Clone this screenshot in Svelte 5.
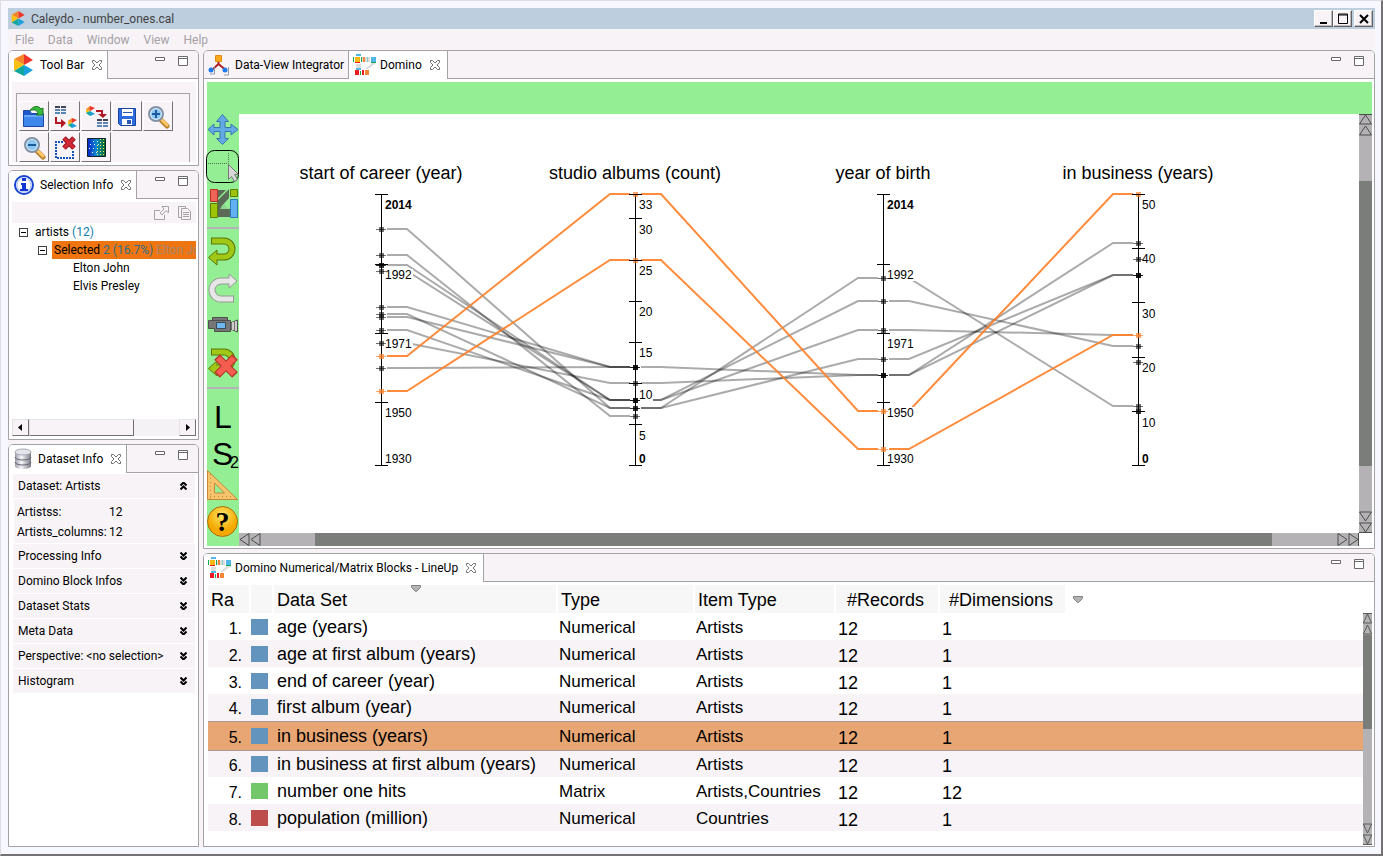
<script>
  const menus = ['File', 'Data', 'Window', 'View', 'Help'];
  const sections = ['Processing Info', 'Domino Block Infos', 'Dataset Stats', 'Meta Data', 'Perspective: <no selection>', 'Histogram'];
  const tools = ['open', 'import', 'export', 'save', 'zoomin', 'zoomout', 'clear', 'heatmap'];
  const modes = ['move', 'select', 'blocks', '|', 'undo', 'redo', 'camera', 'reset', '||', 'label', 'small', 'ruler', 'help'];

  const blue = '#6394bd';
  const rows = [
    ['age (years)', 'Numerical', 'Artists', 12, 1, blue],
    ['age at first album (years)', 'Numerical', 'Artists', 12, 1, blue],
    ['end of career (year)', 'Numerical', 'Artists', 12, 1, blue],
    ['first album (year)', 'Numerical', 'Artists', 12, 1, blue],
    ['in business (years)', 'Numerical', 'Artists', 12, 1, blue],
    ['in business at first album (years)', 'Numerical', 'Artists', 12, 1, blue],
    ['number one hits', 'Matrix', 'Artists,Countries', 12, 12, '#73c76b'],
    ['population (million)', 'Numerical', 'Countries', 12, 1, '#bd4d4a'],
  ];

  const yearTicks = [[194, '2014', 209], [264, '1992', 279], [333, '1971', 348], [402, '1950', 417], [465, '1930', 463]];
  const axes = [
    { x: 381, title: 'start of career (year)', ticks: yearTicks, dots: [229, 255, 265, 265, 271, 307, 314, 317, 330, 343, 368], hot: [356, 391] },
    { x: 635, title: 'studio albums (count)', ticks: [[194, '33', 209], [218, '30', 234], [260, '25', 275], [301, '20', 316], [342, '15', 357], [383, '10', 399], [424, '5', 440], [465, '0', 463]], dots: [367, 367, 367, 383, 400, 400, 400, 408, 408, 416], hot: [194, 260] },
    { x: 883, title: 'year of birth', ticks: yearTicks, dots: [278, 301, 330, 359, 375, 375, 375], hot: [411, 449] },
    { x: 1138, title: 'in business (years)', ticks: [[194, '50', 209], [248, '40', 263], [302, '30', 318], [357, '20', 372], [411, '10', 427], [465, '0', 463]], dots: [243, 259, 275, 275, 275, 346, 362, 406, 411, 411], hot: [194, 335] },
  ];
  // [from axis, start value, end value, highlighted]
  const links = [
    [0, 229, 408], [0, 255, 416], [0, 265, 400], [0, 271, 400], [0, 307, 367], [0, 314, 408], [0, 317, 367], [0, 330, 400], [0, 343, 383], [0, 368, 367],
    [1, 367, 375], [1, 383, 375], [1, 408, 278], [1, 400, 301], [1, 400, 330], [1, 408, 359],
    [2, 278, 406], [2, 301, 346], [2, 330, 335], [2, 359, 275], [2, 375, 243], [2, 375, 275],
    [0, 356, 194, 1], [0, 391, 260, 1], [1, 194, 411, 1], [1, 260, 449, 1], [2, 411, 194, 1], [2, 449, 335, 1],
  ];
  const route = ([a, y1, y2]) => {
    const p = axes[a].x, q = axes[a + 1].x;
    return `M${p + 6} ${y1}H${p + 26}L${q - 25} ${y2}H${q - 5}`;
  };
  const bold = (t) => t === '2014' || t === '0';
</script>

{#snippet logo(size)}
  <svg width={size} height={size} viewBox="0 0 20 22" aria-hidden="true">
    <path fill="#f7862a" d="M0 5 10 0v11z" /><path fill="#ee3529" d="M10 0l9 6-9 5z" />
    <path fill="#fdc010" d="M0 5l10 6-10 6z" /><path fill="#12a79d" d="M0 17l10-6v11z" /><path fill="#1ba0de" d="M10 11l9 5-9 6z" />
  </svg>
{/snippet}

{#snippet dominoIcon()}
  <svg width="24" height="22" viewBox="0 0 24 22" aria-hidden="true">
    <path fill="#ddd" d="M8 3h9v5H8zM19 9h4l-8 6h-3zM3 10h5v5H3z" />
    <path fill="#4fb8e6" d="M3 0h5v2H3zM18 3h5v5h-5zM3 14h5v2H3z" /><path fill="#14a651" d="M0 3h1v5H0zM8 3h1v5H8zM18 8h5v1h-5zM7 17h1v4H7z" />
    <path fill="#fdb913" d="M2 3h5v5H2z" /><path fill="#f58634" d="M10 3h2v5h-2zM12 16h4v5h-4z" /><path fill="#ed1c24" d="M2 8h5v1H2zM2 16h4v5H2zM9 16h2v5H9z" />
    <path fill="#8cc" d="M14 3h1v5h-1z" />
  </svg>
{/snippet}

{#snippet close()}
  <button class="x" aria-label="Close">
    <svg width="12" height="12" viewBox="0 0 12 12"><path fill="#fff" stroke="#737173" d="M1.500 1.500h2L6 4l2.500-2.500h2v2L8 6l2.500 2.500v2h-2L6 8l-2.500 2.500h-2v-2L4 6 1.500 3.500z" /></svg>
  </button>
{/snippet}

{#snippet controls()}
  <div class="controls">
    <button aria-label="Minimize"><svg width="11" height="11" viewBox="0 0 11 11"><path fill="#fff" stroke="#6b696b" d="M.5 1.500h9v3h-9z" /></svg></button>
    <button aria-label="Maximize"><svg width="11" height="11" viewBox="0 0 11 11"><path fill="#fff" stroke="#6b696b" d="M.5.5h9v9h-9zM.5 2.500h9" /></svg></button>
  </div>
{/snippet}

{#snippet grid4(x, y)}
  <path fill="#445" d="M{x} {y}h5v2h-5zM{x + 6} {y}h5v2h-5z" />
  <path fill="#5b86b5" d="M{x} {y + 3}h5v2h-5zM{x + 6} {y + 3}h5v2h-5zM{x} {y + 6}h5v2h-5zM{x + 6} {y + 6}h5v2h-5z" />
{/snippet}

{#snippet miniLogo(x, y)}
  <path fill="#f7862a" d="M{x} {y + 3}l4-3v5z" /><path fill="#ee3529" d="M{x + 4} {y}l5 2-5 3z" />
  <path fill="#fdc010" d="M{x} {y + 3}l4 2-4 2z" /><path fill="#12a79d" d="M{x} {y + 7}l4-2v5z" /><path fill="#1ba0de" d="M{x + 4} {y + 5}l5 3-5 2z" />
{/snippet}

{#snippet toolIcon(name)}
  <svg width="26" height="26" viewBox="0 0 26 26" aria-hidden="true">
    {#if name === 'open'}
      <path fill="#1c58c8" stroke="#174aa8" d="M2.500 7.500h6l2 3h12v13h-20z" /><path fill="#3f86ec" d="M3 12h19v11H3z" /><path fill="#6aa7f5" d="M3 12h19v2H3z" />
      <path fill="#3aba3c" stroke="#15781c" d="M9 7.500C12 3 17 2 20 6l2-1v7h-7l2-2c-1-3-4-4-8-2.500z" />
    {:else if name === 'import'}
      {@render grid4(3, 3)}{@render miniLogo(16, 15)}
      <path fill="none" stroke="#b01824" stroke-width="2" d="M4 14v6h6" /><path fill="#b01824" d="M9 16l5 4-5 5z" />
    {:else if name === 'export'}
      {@render miniLogo(3, 3)}{@render grid4(14, 16)}
      <path fill="none" stroke="#b01824" stroke-width="2" d="M13 8h6v4" /><path fill="#b01824" d="M15 11h9l-4 4z" />
    {:else if name === 'save'}
      <path fill="#2c6be0" stroke="#1b44a0" d="M4.500 5.500h17v17h-15l-2-2z" /><path fill="#fff" d="M8 6h11v7H8zM8 16h10v6H8z" /><path fill="#2b57b0" d="M13 17h4v4h-4zM9 9h9v1H9z" />
    {:else if name === 'zoomin' || name === 'zoomout'}
      <path stroke="#b9832f" stroke-width="5" stroke-linecap="round" d="M16 17l6 6" /><path stroke="#ffc766" stroke-width="3" stroke-linecap="round" d="M17 17l5 5" />
      <circle cx="11" cy="11" r="7" fill="#d5ecfb" stroke="#8292a4" stroke-width="2" /><circle cx="11" cy="11" r="5" fill="#8cc6f0" />
      <path stroke="#1d5a9e" stroke-width="2" d={name === 'zoomin' ? 'M7 11h8M11 7v8' : 'M7 11h8'} />
    {:else if name === 'clear'}
      <path fill="none" stroke="#1454b8" stroke-width="2" stroke-dasharray="2 1" d="M11 8H4v16h17v-7" /><path stroke="#8f1420" stroke-width="5" d="M12 4l10 10M22 4L12 14" /><path stroke="#d42836" stroke-width="3" d="M12 4l10 10M22 4L12 14" />
    {:else}
      <defs><linearGradient id="heat"><stop offset="0" stop-color="#0b23c8" /><stop offset=".5" stop-color="#0b8ad0" /><stop offset="1" stop-color="#0a6a18" /></linearGradient></defs>
      <path fill="url(#heat)" stroke="#123" d="M4.500 4.500h18v18h-18z" /><path stroke="#e8f45a" stroke-dasharray="1 2" d="M17.500 5v17M20.500 5v17M14.500 11v11" /><path stroke="#fff" stroke-dasharray="1 3" d="M7 10.500h10M6 14.500h6M9 18.500h5M10 7.500h7" />
    {/if}
  </svg>
{/snippet}

{#snippet modeIcon(name)}
  <svg width="32" height="37" viewBox="0 0 32 37" aria-hidden="true">
    {#if name === 'move'}
      <path fill="#63a9e3" stroke="#3a76ae" stroke-linejoin="round" d="M15.500 3.500l6 7h-3.500v6h6V13l7 5.500-7 5.500v-3.500h-6v7h3.500l-6 6-6-6H13v-7H7V24l-6-5.500L7 13v3.500h6v-6H9.500z" />
    {:else if name === 'select'}
      <rect x="-.5" y="2.500" width="32" height="32" rx="8" fill="none" stroke="#000" /><path fill="none" stroke="#4d754b" stroke-dasharray="1 1" d="M1 15.500h20.500V4" />
      <path fill="#d8d8d8" stroke="#777" d="M21.500 16.500v15l3-3 3 5 3-2-3-5h4z" />
    {:else if name === 'blocks'}
      <path fill="#5c6b58" d="M10 16L22 4v9l-8 9 8 3v7H10z" /><path fill="#5c6b58" d="M10 5h9l-9 9zM14 24h10v8H14z" /><path fill="#8bd990" d="M13 24l4-5 5 5z" />
      <path fill="#ee6457" stroke="#b82f2a" d="M3.500 4.500h7v12h-7z" /><path fill="#9bc40a" stroke="#5f7e08" d="M3.500 18.500h7v14h-7zM23.500 4.500h7v7h-7z" /><path fill="#63b0f0" stroke="#2e77b8" d="M23.500 14.500h7v18h-7z" />
    {:else if name === 'undo' || name === 'reset'}
      <path fill="none" stroke="#587708" stroke-width="7" d="M4 8h13a8 8 0 0 1 0 16H8" /><path fill="#a2c816" stroke="#587708" d="M10 17v15L1.500 24.500z" /><path fill="none" stroke="#a2c816" stroke-width="5" d="M5 8h12a8 8 0 0 1 0 16H8" />
      {#if name === 'reset'}<path stroke="#b6332c" stroke-width="8" d="M10 13l18 18M28 13L10 31" /><path stroke="#f45d50" stroke-width="6" d="M11 14l16 16M27 14L11 30" />{/if}
    {:else if name === 'redo'}
      <path fill="none" stroke="#999" stroke-width="7" d="M27 29H14a9 9 0 0 1 0-18h8" /><path fill="#e8e8e8" stroke="#999" d="M22 4l8 7-8 7z" /><path fill="none" stroke="#e6e6e6" stroke-width="5" d="M26 29H14a9 9 0 0 1 0-18h9" />
    {:else if name === 'camera'}
      <path fill="#777" stroke="#4e514e" d="M5.500 10.500h15v3h-15zM1.500 13.500h22v11h-16v-3h-6zM23.500 16l7-3v12l-7-3z" /><path fill="#6eb9f2" stroke="#3c4a55" d="M9.500 15.500h9v6h-9z" /><path fill="#ccc" d="M25 15h2v8h-2zM28 14h2v10h-2z" />
    {:else if name === 'label'}
      <text x="7" y="33" font-size="32">L</text>
    {:else if name === 'small'}
      <text x="5" y="33" font-size="32">S</text><text x="23" y="36" font-size="16">2</text>
    {:else if name === 'ruler'}
      <path fill="#f7c36d" stroke="#c58839" stroke-linejoin="round" fill-rule="evenodd" d="M.5 1.500v29h30zM7.500 14v10h10z" /><path stroke="#c58839" stroke-dasharray="1 3" d="M3.500 5v25M3 27.500h24" />
    {:else}
      <defs><radialGradient id="gold" cy=".3"><stop offset="0" stop-color="#ffe86a" /><stop offset="1" stop-color="#f5a800" /></radialGradient></defs>
      <circle cx="15.500" cy="15.500" r="15" fill="url(#gold)" stroke="#a86f10" /><text class="q" x="15.500" y="25" font-size="28" text-anchor="middle">?</text>
    {/if}
  </svg>
{/snippet}

{#snippet bar(top, size, w)}
  <div class="vbar" style:width="{w}px">
    <svg width={w} height="22" viewBox="0 0 13 22" preserveAspectRatio="none"><path d="M.5 10L6.500 1l6 9zM.5 21l6-9 6 9zM0 .5h13" /></svg>
    <div class="track"><i style:top="{top}%" style:height="{size}%"></i></div>
    <svg width={w} height="22" viewBox="0 0 13 22" preserveAspectRatio="none"><path d="M.5 1l6 9 6-9zM.5 12l6 9 6-9zM0 21.500h13" /></svg>
  </div>
{/snippet}

<div class="window">
  <header class="title">
    {@render logo(15)}
    <span>Caleydo - number_ones.cal</span>
    <div class="winbtns">
      <button aria-label="Minimize window"><svg width="12" height="12" viewBox="0 0 12 12"><path d="M2 9h7v2H2z" /></svg></button>
      <button aria-label="Maximize window"><svg width="12" height="12" viewBox="0 0 12 12"><path fill="none" stroke="#000" d="M1.500 1h9v9.500h-9zM1.500 2h9" /></svg></button>
      <button class="gap" aria-label="Close window"><svg width="12" height="12" viewBox="0 0 12 12"><path stroke="#000" stroke-width="2" d="M2 2l8 8M10 2l-8 8" /></svg></button>
    </div>
  </header>
  <nav>{#each menus as m}<button>{m}</button>{/each}</nav>

  <main>
    <aside>
      <section class="panel">
        <div class="head">
          <div class="tab on">{@render logo(22)}<span>Tool Bar</span>{@render close()}</div>
          {@render controls()}
        </div>
        <div class="body">
          <div class="shade">
            <div class="tools">
              {#each tools as t}<button aria-label={t}>{@render toolIcon(t)}</button>{/each}
            </div>
          </div>
        </div>
      </section>

      <section class="panel selection">
        <div class="head">
          <div class="tab on">
            <svg width="22" height="22" viewBox="0 0 22 22" aria-hidden="true"><circle cx="11" cy="11" r="9" fill="#fff" stroke="#1a45cf" stroke-width="2" /><circle cx="11" cy="11" r="7" fill="none" stroke="#a8bdf5" /><path fill="#1238d0" d="M9 4h4v3H9zM8 9h5v6h2v2H7v-2h2v-4H8z" /></svg>
            <span>Selection Info</span>{@render close()}
          </div>
          {@render controls()}
        </div>
        <div class="body">
          <div class="strip">
            <svg width="16" height="16" viewBox="0 0 16 16" fill="none" stroke="#a5a2a5"><path d="M6 5.500H.5v9h10V10M8 1.500h6.500V8L12 5.500 8 10 6 8l4-4z" /></svg>
            <svg width="16" height="16" viewBox="0 0 16 16" fill="none" stroke="#a5a2a5"><path d="M4 12.500H1.500v-11h7V3M4.500 3.500h6l3 3v8h-9zM6 7.500h6M6 9.500h6M6 11.500h6" /></svg>
          </div>
          <div class="tree">
            <div class="node"><button class="fold" aria-label="Collapse artists"></button><span>artists <em>(12)</em></span></div>
            <div class="node l1"><button class="fold" aria-label="Collapse selected"></button><span class="picked">Selected <em>2 (16.7%)</em> <small>Elton John</small></span></div>
            <div class="node l2">Elton John</div>
            <div class="node l2">Elvis Presley</div>
          </div>
          <div class="hscroll">
            <button aria-label="Scroll left"><svg width="5" height="7" viewBox="0 0 5 7"><path d="M4 0v7L0 3.500z" /></svg></button>
            <div class="thumb"></div><div class="rest"></div>
            <button aria-label="Scroll right"><svg width="5" height="7" viewBox="0 0 5 7"><path d="M1 0v7l4-3.500z" /></svg></button>
          </div>
        </div>
      </section>

      <section class="panel dataset">
        <div class="head">
          <div class="tab on">
            <svg width="20" height="22" viewBox="0 0 20 22" aria-hidden="true">
              <defs><linearGradient id="cyl"><stop offset="0" stop-color="#9c9caa" /><stop offset=".4" stop-color="#f6f6fa" /><stop offset="1" stop-color="#7a7a86" /></linearGradient></defs>
              <path fill="url(#cyl)" d="M2 4v14c0 4 16 4 16 0V4z" /><ellipse cx="10" cy="4" rx="8" ry="3" fill="#e4e4ec" stroke="#aaaab4" /><path fill="none" stroke="#666672" d="M2 9c0 4 16 4 16 0M2 14c0 4 16 4 16 0" />
            </svg>
            <span>Dataset Info</span>{@render close()}
          </div>
          {@render controls()}
        </div>
        <div class="body">
          <button class="fold-row">Dataset: Artists<svg width="7" height="8" viewBox="0 0 7 8"><path d="M.5 3.500l3-3 3 3M.5 7.500l3-3 3 3" /></svg></button>
          <dl><dt>Artistss:</dt><dd>12</dd><dt>Artists_columns:</dt><dd>12</dd></dl>
          {#each sections as s}
            <button class="fold-row">{s}<svg width="7" height="8" viewBox="0 0 7 8"><path d="M.5.5l3 3 3-3M.5 4.500l3 3 3-3" /></svg></button>
          {/each}
        </div>
      </section>
    </aside>

    <div class="right">
      <section class="panel domino">
        <div class="head">
          <div class="tab">
            <svg width="22" height="22" viewBox="0 0 22 22" aria-hidden="true"><path fill="#fba919" stroke="#e88b0c" d="M7.500 1.500h6v6h-6z" /><path fill="none" stroke="#b01f24" stroke-width="2" d="M10.500 8v2L5 15M10.500 10l6 5" /><circle cx="3" cy="16" r="2.500" fill="#1d7ae8" /><circle cx="17" cy="16" r="2.500" fill="#1d7ae8" /><path fill="none" stroke="#99a" d="M6.500 12v8H2M20.500 13v8H16" /></svg>
            <span>Data-View Integrator</span>
          </div>
          <div class="tab on mid">{@render dominoIcon()}<span>Domino</span>{@render close()}</div>
          {@render controls()}
        </div>
        <div class="body">
          <div class="canvas">
            <div class="modes">
              {#each modes as m}
                {#if m === '|'}<hr />{:else if m === '||'}<hr class="tall" />{:else}<button aria-label={m}>{@render modeIcon(m)}</button>{/if}
              {/each}
            </div>
            <div class="stage">
              <svg class="chart" viewBox="239 114 1120 419" role="img" aria-label="Parallel coordinates of artists">
                {#each links as l}<path class="link" class:hot={l[3]} d={route(l)} />{/each}
                {#each axes as a}
                  <text class="name" x={a.x} y="179" text-anchor="middle">{a.title}</text>
                  {#each a.ticks as t}<rect x={a.x + 4} y={t[2] - 10} width={t[1].length * 7} height="12" fill="#fff" />{/each}
                  <rect x={a.x} y="194" width="1" height="272" />
                  <g class="dots">{#each a.dots as d}<path d="M{a.x - 2} {d - 2}h5v5h-5z" /><path d="M{a.x - 5} {d}h10v1h-10z" />{/each}</g>
                  <g class="dots warm">{#each a.hot as d}<path d="M{a.x - 2} {d - 2}h5v5h-5z" /><path d="M{a.x - 5} {d}h10v1h-10z" />{/each}</g>
                  {#each a.ticks as t}
                    <rect x={a.x - 6} y={t[0]} width="13" height="1" />
                    <text class="tick" class:strong={bold(t[1])} x={a.x + 4} y={t[2]}>{t[1]}</text>
                  {/each}
                {/each}
              </svg>
              {@render bar(12, 76, 13)}
              <div class="hbar">
                <svg width="22" height="13" viewBox="0 0 22 13"><path d="M10 .5L1 6.500l9 6zM21 .5l-9 6 9 6z" /></svg>
                <div class="track"><i></i></div>
                <svg width="22" height="13" viewBox="0 0 22 13"><path d="M1 .5l9 6-9 6zM12 .5l9 6-9 6zM21.500 0v13" /></svg>
              </div>
            </div>
          </div>
        </div>
      </section>

      <section class="panel lineup">
        <div class="head">
          <div class="tab on mid">{@render dominoIcon()}<span>Domino Numerical/Matrix Blocks - LineUp</span>{@render close()}</div>
          {@render controls()}
        </div>
        <div class="body">
          <table>
            <colgroup><col class="c1" /><col class="c2" /><col class="c3" /><col class="c4" /><col class="c5" /><col class="c6" /><col class="c7" /><col /></colgroup>
            <thead>
              <tr>
                <th>Ra</th><th aria-label="Colour"></th><th class="sorted">Data Set<svg class="sort" width="10" height="7" viewBox="0 0 10 7"><path d="M.5.5h9v2l-4 4h-1l-4-4z" /></svg></th>
                <th>Type</th><th>Item Type</th><th class="num">#Records</th><th class="num">#Dimensions</th>
                <th class="more"><svg width="10" height="7" viewBox="0 0 10 7"><path d="M.5.5h9v2l-4 4h-1l-4-4z" /></svg></th>
              </tr>
            </thead>
            <tbody>
              {#each rows as r, i}
                <tr class:current={i === 4}>
                  <td class="rank">{i + 1}.</td><td><i class="swatch" style:background={r[5]}></i></td><td class="set">{r[0]}</td>
                  <td class="kind">{r[1]}</td><td class="kind">{r[2]}</td><td class="count">{r[3]}</td><td class="count">{r[4]}</td><td></td>
                </tr>
              {/each}
            </tbody>
          </table>
          <div class="side">{@render bar(0, 50, 9)}</div>
        </div>
      </section>
    </div>
  </main>
</div>

<style>
  :global(body) { background: #f7f7ff; }
  * { box-sizing: border-box; }
  .window { min-height: 100vh; display: flex; flex-direction: column; padding: 7px 6px 7px 7px; border: 1px solid #e0dce0; border-right: 2px solid #737173; border-bottom: 2px solid #737173; background: #f7f7ff; color: #000; font: 12px/18px Roboto, sans-serif; }
  button { margin: 0; padding: 0; border: 0; background: none; color: inherit; font: inherit; }
  svg { display: block; flex: none; }
  em, i { font-style: normal; }

  .title { height: 21px; flex: none; display: flex; align-items: center; gap: 5px; padding: 0 2px 0 3px; background: #bdcfde; color: #424142; }
  .winbtns { margin-left: auto; display: flex; }
  .winbtns button { width: 19px; height: 17px; display: grid; place-items: center; background: #f7f3f7; border: 1px solid; border-color: #fff #636163 #636163 #fff; box-shadow: inset -1px -1px #bbb; }
  .winbtns .gap { margin-left: 2px; }
  nav { height: 21px; flex: none; display: flex; align-items: center; gap: 14px; padding-left: 7px; background: #f7f3f7; color: #a5a2a5; }

  main { flex: 1; display: grid; grid-template-columns: 191px 1fr; gap: 4px; background: #f7f3f7; }
  aside, .right { display: flex; flex-direction: column; gap: 4px; min-width: 0; }
  .panel { display: flex; flex-direction: column; border: 1px solid #a5a2a5; border-radius: 5px 5px 0 0; background: #fff; }
  .head { height: 28px; flex: none; display: flex; background: linear-gradient(#a5a2a5, #a5a2a5) bottom / 100% 1px no-repeat #f7f3f7; border-radius: 4px 4px 0 0; }
  .tab { display: flex; align-items: center; gap: 5px; padding: 0 4px; white-space: nowrap; }
  .tab.on { background: #fff; border-right: 1px solid #a5a2a5; border-radius: 4px 0 0 0; }
  .tab.mid { padding-right: 6px; gap: 3px; }
  .tab.mid .x { padding-left: 4px; }
  .tab + .tab.on { border-left: 1px solid #a5a2a5; border-radius: 0; }
  .x { padding-left: 2px; }
  .controls { margin: 5px 9px 0 auto; display: flex; align-items: flex-start; gap: 12px; }
  .body { flex: 1; padding: 3px 2px 3px 3px; display: flex; flex-direction: column; min-height: 0; }

  .shade { background: #f7f3f7; padding: 11px 6px 0 4px; }
  .tools { display: flex; flex-wrap: wrap; gap: 1px; padding: 7px 2px 0; border: 1px solid #a5a2a5; border-bottom: 0; }
  .tools button { width: 30px; height: 30px; display: grid; place-items: center; border: 1px solid; border-color: #fff #737173 #737173 #fff; }

  .selection { height: 270px; }
  .strip { height: 21px; display: flex; align-items: center; justify-content: flex-end; gap: 7px; padding-right: 3px; background: #f7f3f7; }
  .tree { flex: 1; overflow: hidden; white-space: nowrap; }
  .node { height: 18px; display: flex; align-items: center; padding-left: 7px; gap: 5px; }
  .l1 { padding-left: 26px; }
  .l2 { padding-left: 61px; }
  .fold { width: 9px; height: 9px; flex: none; border: 1px solid #424142; background: linear-gradient(#000, #000) center / 5px 1px no-repeat; }
  .tree span { padding-left: 2px; }
  .tree em { color: #107dad; }
  .picked { flex: 1; background: #ef7510; }
  .tree .picked em { color: #2f6f8c; }
  .picked small { font-size: 12px; color: #a5866b; }
  .hscroll { height: 17px; display: flex; background: #f4f2f5; }
  .hscroll button, .thumb { width: 17px; display: grid; place-items: center; background: #f7f3f7; border: 1px solid; border-color: #e5e2e5 #737173 #737173 #e5e2e5; }
  .hscroll .thumb { width: 105px; }
  .rest { flex: 1; }

  .dataset { flex: 1; }
  .dataset .body { gap: 1px; padding: 1px 3px 3px; }
  .fold-row { height: 24px; display: flex; align-items: center; justify-content: space-between; padding: 0 8px 0 5px; margin-left: 1px; background: #f7f3f7; }
  .fold-row svg { fill: none; stroke: #000; stroke-width: 2; }
  dl { margin: 0 1px 0 2px; padding: 3px 3px 1px; display: grid; grid-template-columns: 92px 1fr; line-height: 20px; background: #f7f3f7; white-space: nowrap; }
  dd { margin: 0; }

  .domino { flex: 1; }
  .canvas { flex: 1; display: flex; background: #94ef94; }
  .domino .body { padding-bottom: 2px; }
  .modes { width: 32px; flex: none; padding-top: 29px; font-family: "Liberation Sans", Arial, sans-serif; }
  .modes button { display: block; height: 37px; }
  .modes svg { overflow: visible; }
  .modes .q { font-family: "Liberation Serif", serif; font-weight: 700; }
  hr { height: 11px; margin: 0; border: 0; background: linear-gradient(#b5b2b5, #b5b2b5) center / 100% 2px no-repeat; }
  hr.tall { height: 14px; }
  .stage { flex: 1; min-width: 0; margin-top: 32px; display: grid; grid-template: minmax(0, 1fr) 13px / minmax(0, 1fr) 13px; background: #fff; font-family: "Liberation Sans", Arial, sans-serif; }
  .chart { width: 100%; height: 100%; }
  .link { fill: none; stroke: #000; stroke-opacity: .33; stroke-width: 2; }
  .link.hot { stroke: #ff7f27; stroke-opacity: .9; }
  .dots { fill: #000; fill-opacity: .55; }
  .warm { fill: #ff7f27; fill-opacity: .7; }
  .name { font-size: 18px; }
  .tick { font-size: 12px; }
  .strong { font-weight: 700; }
  .vbar, .hbar { display: flex; background: #b5b2b5; }
  .vbar { flex-direction: column; }
  .vbar svg, .hbar svg { fill: none; stroke: #4a4d4a; }
  .track { flex: 1; position: relative; }
  .track i { position: absolute; width: 100%; background: #7b7d7b; }
  .hbar .track i { left: 5%; width: 89%; height: 100%; }

  .lineup .body { flex-direction: row; padding: 3px 2px 1px 4px; }
  table { flex: 1; align-self: flex-start; width: 100%; margin-bottom: 14px; table-layout: fixed; border-collapse: collapse; font: 18px/20px "Liberation Sans", Arial, sans-serif; }
  .c1 { width: 42px; } .c2 { width: 23px; } .c3 { width: 284px; } .c4 { width: 137px; } .c5 { width: 141px; } .c6 { width: 104px; } .c7 { width: 127px; }
  th { height: 28px; padding: 2px 3px 0; text-align: left; font-weight: 400; background: #f7f7f7; border-right: 2px solid #fff; }
  th.sorted { position: relative; }
  th svg { fill: #b5b2b5; stroke: #848284; }
  .sort { position: absolute; left: 137px; top: 0; }
  th.num { text-align: center; padding: 2px 3px 0 0; }
  th.more { background: none; border: 0; padding: 0 6px; }
  td { height: 27px; padding: 0 3px 0 4px; white-space: nowrap; vertical-align: middle; }
  tbody tr:nth-child(even) { background: #f7f3f7; }
  tbody tr.current { background: #e7a673; }
  .current td { height: 29px; border-top: 1px solid #a59a94; border-bottom: 1px solid #a59a94; }
  td.rank { font-size: 16px; text-align: right; padding: 4px 8px 0 0; }
  td.kind { font-size: 17px; padding: 2px 0 0 2px; }
  td.count { padding: 4px 0 0 3px; }
  .swatch { display: block; width: 17px; height: 16px; margin-left: -3px; }
  .side { display: flex; padding-top: 28px; }
</style>
